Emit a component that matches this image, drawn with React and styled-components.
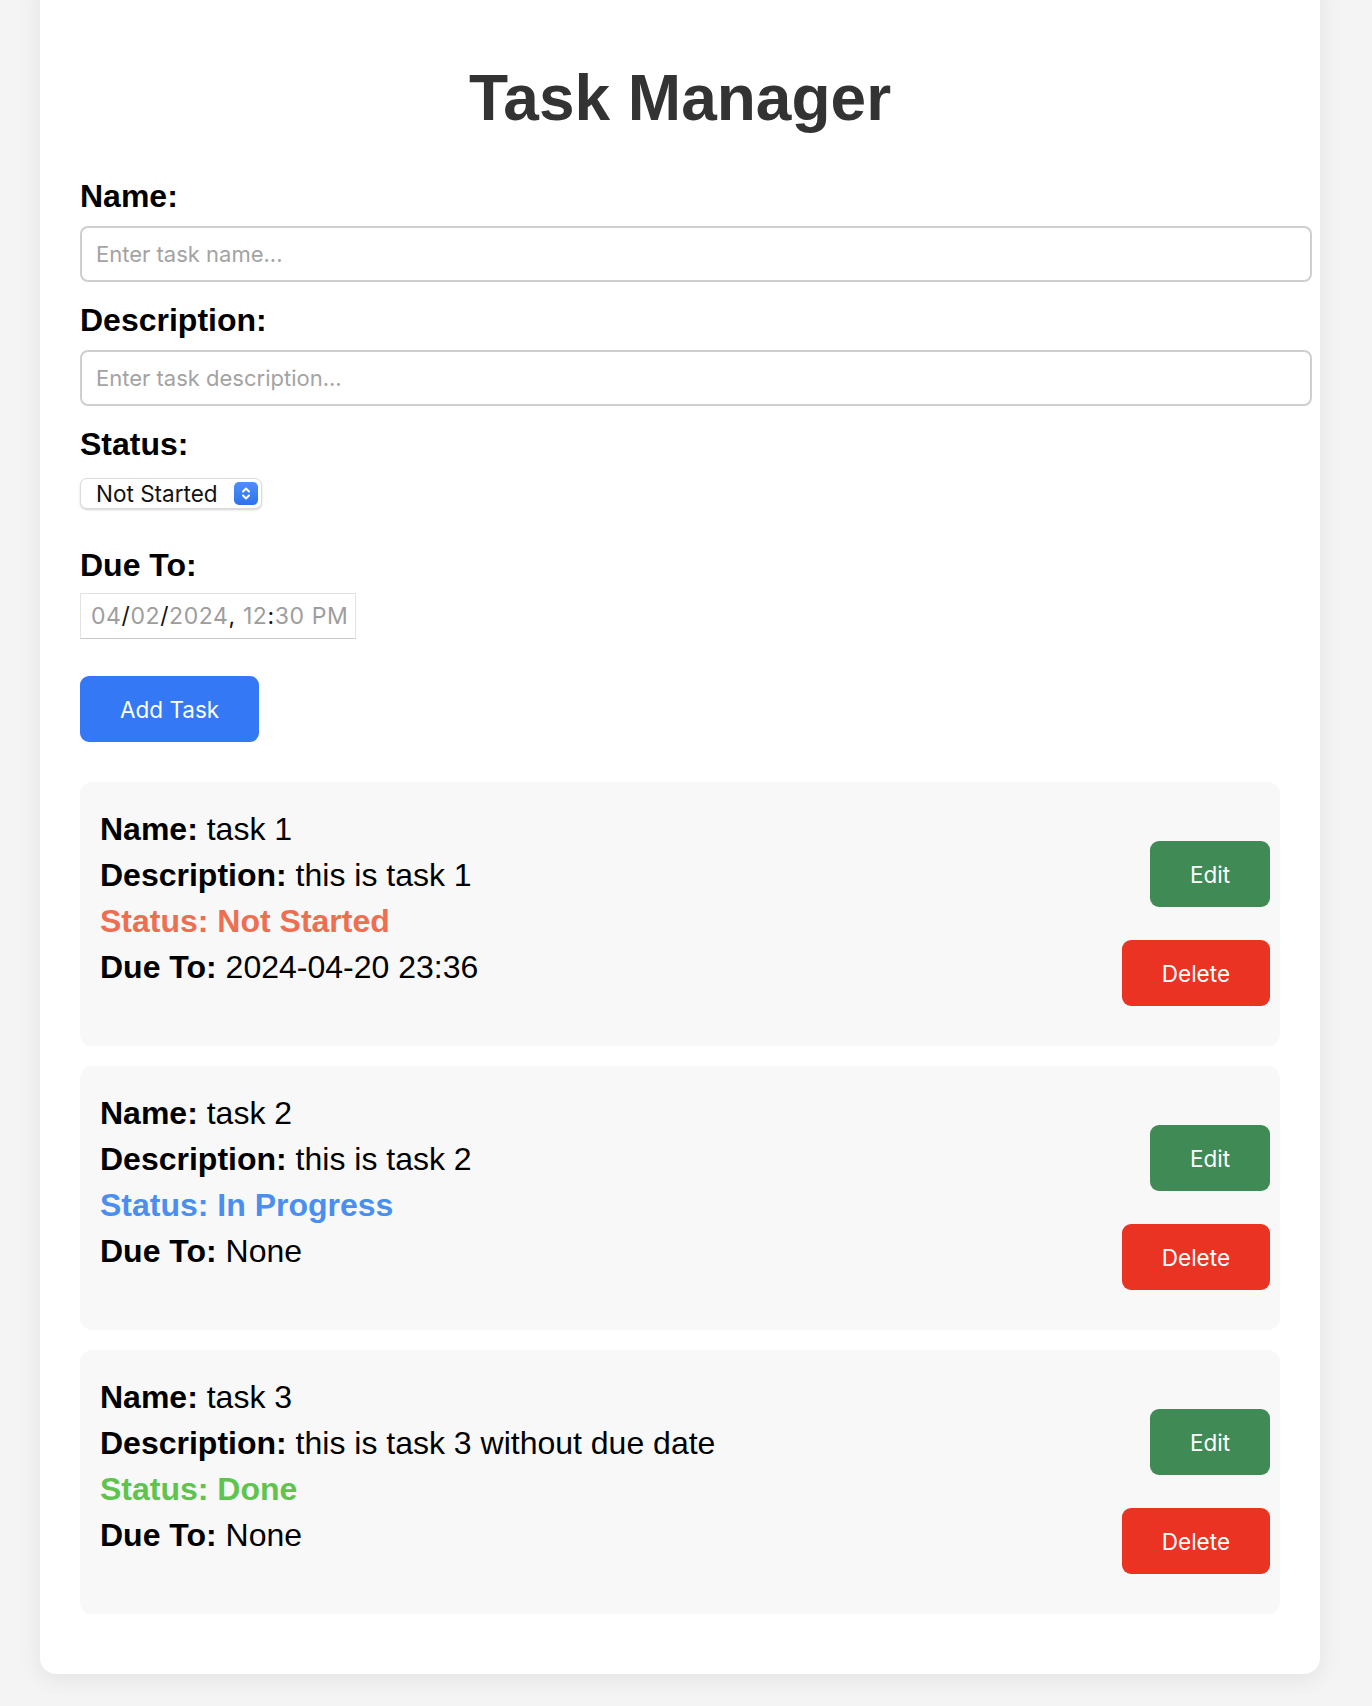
import React, { useState } from 'react';
import styled, { createGlobalStyle } from 'styled-components';

const GlobalStyle = createGlobalStyle`
  html, body {
    margin: 0;
    padding: 0;
    background: #f4f4f4;
  }
  body {
    font-family: "Liberation Sans", Arial, sans-serif;
  }
`;

const Container = styled.div`
  width: 1200px;
  margin: -24px 0 33px 40px;
  padding: 24px 40px 60px;
  background: #ffffff;
  border-radius: 16px;
  box-shadow: 0 4px 24px rgba(0, 0, 0, 0.08);
`;

const Title = styled.h1`
  margin: 61px 0 43px;
  font-size: 64px;
  line-height: 74px;
  font-weight: 700;
  text-align: center;
  color: #333333;
`;

const Label = styled.label`
  display: block;
  font-size: 32px;
  line-height: 36px;
  font-weight: 700;
  color: #000;
  margin-bottom: ${props => props.$gap || 12}px;
`;

const TextInput = styled.input`
  display: block;
  width: 100%;
  height: 52px;
  padding: 0 14px;
  margin: 0 0 20px;
  border: 2px solid #cfcfcf;
  border-radius: 8px;
  font-family: Inter, "Noto Sans", sans-serif;
  font-size: 22px;
  color: #222;
  background: #fff;

  &::placeholder {
    color: #a3a3a3;
  }

  &:focus {
    outline: none;
    border-color: #3478f6;
  }
`;

const SelectWrap = styled.div`
  position: relative;
  width: 182px;
  height: 31px;
  margin-bottom: 38px;
`;

const Select = styled.select`
  appearance: none;
  -webkit-appearance: none;
  width: 100%;
  height: 100%;
  padding: 0 34px 0 15px;
  border: 1px solid #dcdcdc;
  border-radius: 7px;
  background: #fff;
  box-shadow: 0 1px 2px rgba(0, 0, 0, 0.18);
  font-family: Inter, "Noto Sans", sans-serif;
  font-size: 22.5px;
  color: #111;
  outline: none;
`;

const Stepper = styled.span`
  position: absolute;
  top: 4px;
  right: 4px;
  width: 24px;
  height: 23px;
  border-radius: 5px;
  background: linear-gradient(#4d90f8, #2f72ec);
  display: flex;
  align-items: center;
  justify-content: center;
  pointer-events: none;
`;

const DateField = styled.div`
  display: inline-flex;
  align-items: center;
  box-sizing: border-box;
  height: 46px;
  width: 276px;
  padding: 0 10px;
  margin-bottom: 37px;
  border: 1px solid #e3e3e3;
  border-bottom-color: #c9c9c9;
  font-family: Inter, "Noto Sans", sans-serif;
  font-size: 23px;
  letter-spacing: 0.6px;
  color: #111;
`;

const Seg = styled.span`
  color: #9d9d9d;
`;

const Button = styled.button`
  height: 66px;
  padding: 0 40px;
  border: none;
  border-radius: 9px;
  background: ${props => props.$color};
  color: #fff;
  font-family: Inter, "Noto Sans", sans-serif;
  font-size: 22.5px;
  cursor: pointer;
`;

const FormBlock = styled.div`
  display: block;
  margin-bottom: 40px;
`;

const TaskList = styled.div`
  display: flex;
  flex-direction: column;
  gap: 20px;
`;

const TaskCard = styled.div`
  display: flex;
  justify-content: space-between;
  align-items: flex-start;
  padding: 24px 10px 40px 20px;
  background: #f8f8f8;
  border-radius: 12px;
`;

const TaskInfo = styled.div`
  font-size: 32px;
  line-height: 46px;
  color: #000;
`;

const Line = styled.div`
  color: ${props => props.$color || '#000'};
  font-weight: ${props => (props.$bold ? 700 : 400)};
`;

const Actions = styled.div`
  display: flex;
  flex-direction: column;
  align-items: flex-end;
  gap: 33px;
  padding-top: 35px;
`;

const statusColors = {
  'Not Started': '#ef6e51',
  'In Progress': '#4a8ff0',
  Done: '#5fc44d',
};

const initialTasks = [
  { id: 1, name: 'task 1', description: 'this is task 1', status: 'Not Started', due: '2024-04-20 23:36' },
  { id: 2, name: 'task 2', description: 'this is task 2', status: 'In Progress', due: null },
  { id: 3, name: 'task 3', description: 'this is task 3 without due date', status: 'Done', due: null },
];

export default function App() {
  const [tasks, setTasks] = useState(initialTasks);
  const [status, setStatus] = useState('Not Started');

  return (
    <>
      <GlobalStyle />
      <Container>
        <Title>Task Manager</Title>

        <FormBlock>
          <Label>Name:</Label>
          <TextInput placeholder="Enter task name..." />

          <Label>Description:</Label>
          <TextInput placeholder="Enter task description..." />

          <Label $gap={16}>Status:</Label>
          <SelectWrap>
            <Select value={status} onChange={(e) => setStatus(e.target.value)}>
              <option>Not Started</option>
              <option>In Progress</option>
              <option>Done</option>
            </Select>
            <Stepper>
              <svg width="12" height="17" viewBox="0 0 12 17" fill="none" stroke="#fff" strokeWidth="2" strokeLinecap="round" strokeLinejoin="round">
                <path d="M3 6.5 6 3.5 9 6.5" />
                <path d="M3 10.5 6 13.5 9 10.5" />
              </svg>
            </Stepper>
          </SelectWrap>

          <Label $gap={10}>Due To:</Label>
          <div>
            <DateField>
              <Seg>04</Seg>/<Seg>02</Seg>/<Seg>2024</Seg>,&nbsp;<Seg>12</Seg>:<Seg>30</Seg>&nbsp;<Seg>PM</Seg>
            </DateField>
          </div>

          <Button $color="#3478f6">Add Task</Button>
        </FormBlock>

        <TaskList>
          {tasks.map(task => (
            <TaskCard key={task.id}>
              <TaskInfo>
                <Line><b>Name:</b> {task.name}</Line>
                <Line><b>Description:</b> {task.description}</Line>
                <Line $bold $color={statusColors[task.status]}>Status: {task.status}</Line>
                <Line><b>Due To:</b> {task.due || 'None'}</Line>
              </TaskInfo>
              <Actions>
                <Button $color="#408a56">Edit</Button>
                <Button
                  $color="#eb3324"
                  onClick={() => setTasks(tasks.filter(t => t.id !== task.id))}
                >
                  Delete
                </Button>
              </Actions>
            </TaskCard>
          ))}
        </TaskList>
      </Container>
    </>
  );
}
